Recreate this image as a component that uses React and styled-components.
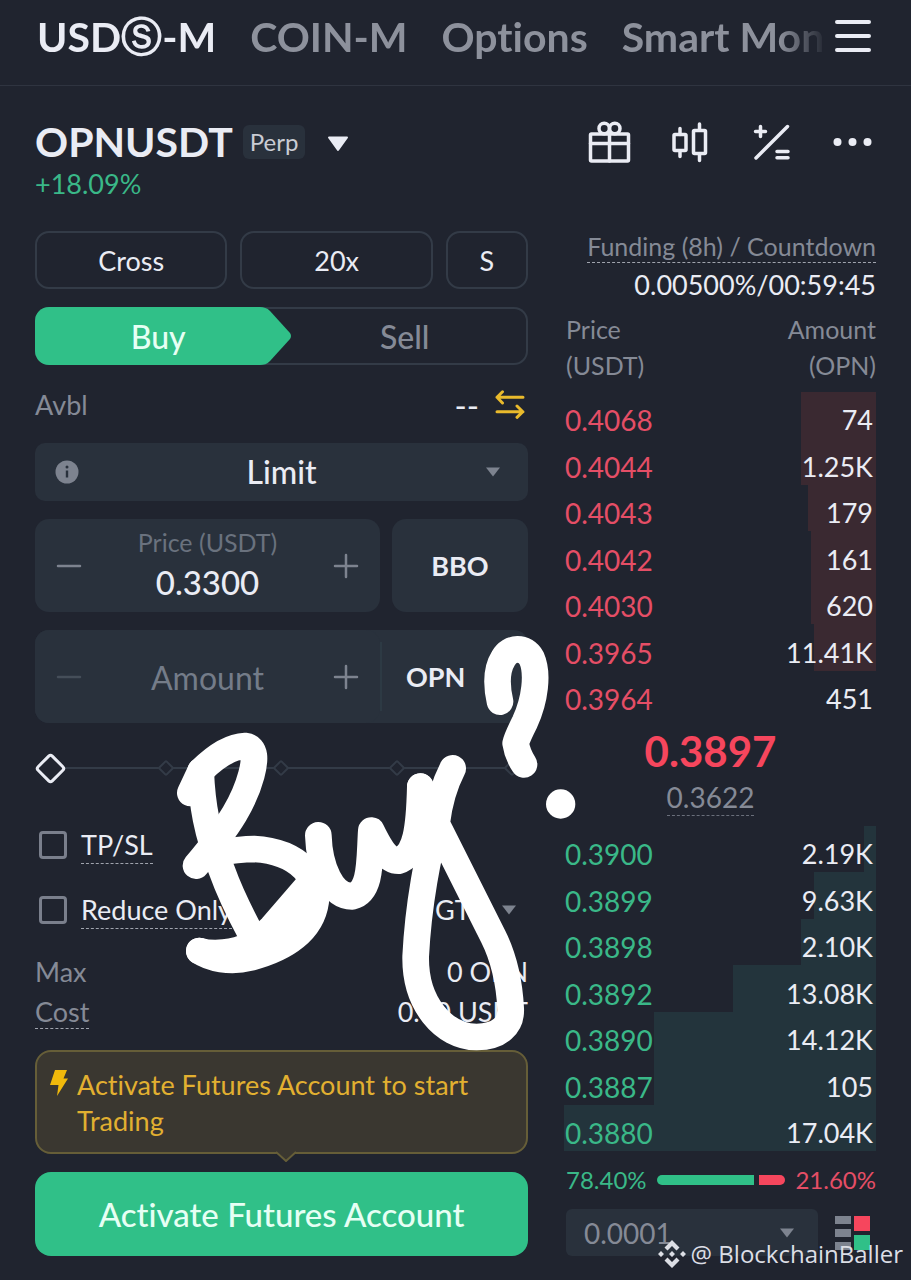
import React, { useState } from "react";
import styled, { createGlobalStyle } from "styled-components";

const c = {
  bg: "#20242f",
  panel: "#29313c",
  line: "#333b47",
  text: "#eaecf4",
  muted: "#858a96",
  faint: "#6a727e",
  green: "#30c088",
  greenText: "#3ab888",
  red: "#f6465d",
  redText: "#e54e66",
  yellow: "#f0b90b",
};

const GlobalStyle = createGlobalStyle`
  * { box-sizing: border-box; }
  body { margin: 0; background: ${c.bg}; }
  button, input, select { font: inherit; color: inherit; }
  button { background: none; border: 0; padding: 0; cursor: pointer; }
  h1, p, dl, dd { margin: 0; }
`;

const Page = styled.div`
  position: relative;
  min-height: 100vh;
  overflow: hidden;
  background: ${c.bg};
  color: ${c.text};
  font: 400 27px/36px Lato, "Liberation Sans", sans-serif;
  font-variant-ligatures: none;
`;

const TopBar = styled.header`
  display: flex;
  align-items: flex-start;
  height: 86px;
  padding: 11px 40px 0 37px;
  border-bottom: 1px solid #2f3440;
`;

const Tabs = styled.nav`
  flex: 1;
  min-width: 0;
  display: flex;
  gap: 34px;
  overflow: hidden;
  white-space: nowrap;
  mask-image: linear-gradient(to right, #000 calc(100% - 48px), transparent);
`;

const Tab = styled.a`
  display: flex;
  color: ${(p) => (p.$active ? c.text : "#8d919c")};
  font-size: 41px;
  line-height: 52px;
  font-weight: 700;
  text-decoration: none;
`;

const CoinMark = styled.span`
  font-family: "DejaVu Sans", sans-serif;
  font-size: 41px;
`;

const MenuButton = styled.button`
  flex: none;
  display: flex;
  padding: 8px 0 0 8px;
`;

const PairBar = styled.section`
  display: flex;
  justify-content: space-between;
  padding: 32px 37px 0 35px;
`;

const PairName = styled.div`
  display: flex;
  align-items: center;
  height: 48px;
  h1 { font-size: 41px; line-height: 48px; font-weight: 700; }
`;

const PerpTag = styled.span`
  margin: 0 22px 0 10px;
  padding: 0 7px;
  border-radius: 6px;
  background: ${c.panel};
  color: #c9ccd4;
  font-size: 24px;
  line-height: 34px;
`;

const Change = styled.p`
  color: ${c.greenText};
  font-size: 27px;
`;

const Tools = styled.div`
  display: flex;
  gap: 37px;
  height: 48px;
  button { display: flex; align-items: center; }
`;

const Columns = styled.main`
  display: grid;
  grid-template-columns: 493fr 312fr;
  column-gap: 36px;
  padding: 29px 35px 24px;
`;

const Form = styled.form`
  display: flex;
  flex-direction: column;
  gap: 18px;
`;

const ModeRow = styled.div`
  display: grid;
  grid-template-columns: 192fr 192fr 82fr;
  gap: 13px;
`;

const OutlineButton = styled.button`
  height: 58px;
  padding-top: 2px;
  border: 2px solid ${c.line};
  border-radius: 14px;
`;

const SideSwitch = styled.div`
  position: relative;
  display: flex;
  height: 58px;
  border-radius: 14px;
  box-shadow: inset 0 0 0 2px ${c.line};
`;

const SideButton = styled.button`
  position: relative;
  width: 50%;
  padding-top: 2px;
  font-size: 32px;
  font-weight: 500;
  color: ${(p) => (p.$active ? "#e6fff4" : c.muted)};
  span { position: relative; }
`;

const SideFill = styled.i`
  position: absolute;
  inset: 0 22px 0 0;
  border-radius: 14px 0 0 14px;
  background: ${c.green};
  svg { position: absolute; left: 100%; top: 0; }
`;

const Available = styled.div`
  display: flex;
  align-items: center;
  height: 42px;
  padding-top: 2px;
  color: ${c.muted};
  b { margin-left: auto; margin-right: 16px; color: ${c.text}; font-size: 33px; font-weight: 400; }
  button { display: flex; margin-right: 3px; }
`;

const Picker = styled.div`
  position: relative;
  display: flex;
  align-items: center;
  height: ${(p) => p.$height}px;
  border-radius: ${(p) => p.$radius}px;
  background: ${c.panel};
  select {
    width: 100%;
    height: 100%;
    padding: ${(p) => p.$pad};
    border: 0;
    appearance: none;
    background: none;
    outline: 0;
    font-size: ${(p) => p.$size}px;
    font-weight: ${(p) => p.$weight || 400};
    color: ${(p) => p.$color || c.text};
    text-align: ${(p) => p.$align || "left"};
    text-align-last: ${(p) => p.$align || "left"};
  }
`;

const InfoIcon = styled.span`
  position: absolute;
  left: 20px;
  display: flex;
`;

const Caret = styled.svg`
  position: absolute;
  right: ${(p) => p.$right}px;
  top: calc(50% - 5px);
  pointer-events: none;
`;

const FieldRow = styled.div`
  display: grid;
  grid-template-columns: 345fr 136fr;
  gap: 12px;
`;

const Fields = styled.div`
  display: grid;
  grid-template-columns: 345fr 148fr;
  border-radius: 14px;
  background: ${c.panel};
`;

const Stepper = styled.div`
  display: flex;
  align-items: center;
  height: 93px;
  padding: 0 21px;
  border-radius: 14px;
  background: ${c.panel};
  button { display: flex; }
`;

const StepField = styled.label`
  flex: 1;
  min-width: 0;
  display: flex;
  flex-direction: column;
  text-align: center;
  color: ${c.faint};
  font-size: 25px;
  line-height: 32px;
  input {
    width: 100%;
    height: 48px;
    padding: 0;
    border: 0;
    background: none;
    outline: 0;
    text-align: center;
    font-size: 33px;
    font-weight: 500;
    color: ${c.text};
  }
  input::placeholder { color: #747c89; opacity: 1; font-size: 32px; font-weight: 400; }
`;

const PanelButton = styled.button`
  border-radius: 14px;
  background: ${c.panel};
  font-weight: 700;
`;

const UnitPicker = styled(Picker)`
  height: auto;
  margin: 12px 0;
  border-radius: 0;
  border-left: 2px solid #2d3a44;
`;

const SliderBox = styled.div`
  position: relative;
  height: 54px;
  input {
    position: relative;
    display: block;
    width: calc(100% - 10px);
    height: 54px;
    margin: 0 0 0 4px;
    appearance: none;
    background: none;
  }
  input::-webkit-slider-thumb {
    appearance: none;
    width: 23px;
    height: 23px;
    border: 3px solid ${c.text};
    border-radius: 4px;
    background: ${c.bg};
    transform: rotate(45deg);
  }
`;

const SliderMarks = styled.div`
  position: absolute;
  inset: 0 10px 0 9px;
  display: flex;
  align-items: center;
  justify-content: space-between;
  background: linear-gradient(${c.line}, ${c.line}) center / 100% 2px no-repeat;
  i {
    width: 12px;
    height: 12px;
    border: 2px solid ${c.line};
    border-radius: 2px;
    background: ${c.bg};
    transform: rotate(45deg);
  }
`;

const Options = styled.div`
  display: flex;
  flex-direction: column;
  gap: 29px;
  padding: 14px 0 6px;
`;

const OptionRow = styled.div`
  display: flex;
  align-items: center;
  justify-content: space-between;
  height: 36px;
`;

const Check = styled.label`
  display: flex;
  align-items: center;
  gap: 14px;
  padding-left: 4px;
  input {
    appearance: none;
    width: 28px;
    height: 28px;
    margin: 0;
    border: 3px solid #7a7f8c;
    border-radius: 4px;
  }
`;

const Dotted = styled.span`
  line-height: 36px;
  border-bottom: 1px dashed ${(p) => p.$line || "#a0a4ae"};
`;

const ForcePicker = styled(Picker)`
  width: 93px;
  background: none;
`;

const Totals = styled.dl`
  div { display: flex; justify-content: space-between; height: 40px; align-items: center; }
  dt { color: ${c.muted}; }
`;

const Notice = styled.p`
  position: relative;
  display: flex;
  gap: 8px;
  min-height: 103px;
  padding: 15px 12px 13px;
  border: 2px solid #665e38;
  border-radius: 16px;
  background: #3a3730;
  color: #e2b030;
  > svg { flex: none; margin-top: 2px; }
`;

const NoticeTip = styled.span`
  position: absolute;
  left: calc(50% - 6px);
  bottom: -10px;
  display: flex;
`;

const Submit = styled.button`
  height: 84px;
  border-radius: 16px;
  background: ${c.green};
  color: #e6fff4;
  font-size: 33px;
  font-weight: 500;
`;

const Book = styled.aside`
  display: flex;
  flex-direction: column;
`;

const Funding = styled.div`
  display: flex;
  flex-direction: column;
  align-items: flex-end;
  margin-bottom: 3px;
  color: ${c.muted};
  font-size: 25px;
  ${Dotted} { line-height: 31px; }
  p { color: ${c.text}; font-size: 27px; line-height: 44px; }
`;

const Ladder = styled.table`
  width: 100%;
  border-collapse: collapse;
  thead th {
    height: 82px;
    padding: 0 0 8px 2px;
    font-size: 25px;
    font-weight: 400;
    text-align: left;
    color: ${c.muted};
  }
  thead th + th { text-align: right; }
`;

const Level = styled.tr`
  height: 46px;
  background: linear-gradient(to left, ${(p) => p.$tone} ${(p) => p.$depth}%, transparent ${(p) => p.$depth}%);
  &:nth-child(even) { height: 47px; }
  td { padding: 10px 3px 0 1px; line-height: 34px; }
  td:first-child { color: ${(p) => p.$color}; font-size: 28px; }
  td + td { text-align: right; }
`;

const LastPrice = styled.div`
  display: flex;
  flex-direction: column;
  align-items: center;
  gap: 2px;
  height: 109px;
  padding: 8px 19px 0 0;
  color: ${c.muted};
  font-size: 28px;
  strong { color: ${c.red}; font-size: 42px; line-height: 52px; }
`;

const Ratio = styled.div`
  display: flex;
  align-items: center;
  gap: 10px;
  height: 58px;
  padding-left: 2px;
  font-size: 24px;
`;

const Share = styled.span`
  color: ${(p) => p.$color};
`;

const Bar = styled.span`
  flex: ${(p) => p.$share};
  height: 10px;
  background: ${(p) => p.$color};
  border-radius: ${(p) => (p.$left ? "5px 0 0 5px" : "0 5px 5px 0")};
`;

const Bars = styled.span`
  flex: 1;
  display: flex;
  gap: 5px;
`;

const BookFooter = styled.div`
  display: flex;
  align-items: center;
  padding-left: 2px;
  ${Picker} { flex: 1; margin-right: 17px; }
  > button { display: flex; margin-right: 5px; }
`;

const Scribble = styled.svg`
  position: absolute;
  left: 150px;
  top: 620px;
  pointer-events: none;
`;

const Watermark = styled.div`
  position: absolute;
  right: 8px;
  bottom: 8px;
  display: flex;
  align-items: center;
  gap: 5px;
  color: #dcdee5;
  font: 400 24px/36px "Open Sans", "Noto Sans", sans-serif;
`;

const asks = [
  ["0.4068", "74", 24],
  ["0.4044", "1.25K", 24],
  ["0.4043", "179", 22],
  ["0.4042", "161", 21],
  ["0.4030", "620", 21],
  ["0.3965", "11.41K", 20],
  ["0.3964", "451", 0],
];

const bids = [
  ["0.3900", "2.19K", 4],
  ["0.3899", "9.63K", 20],
  ["0.3898", "2.10K", 24],
  ["0.3892", "13.08K", 46],
  ["0.3890", "14.12K", 71],
  ["0.3887", "105", 71],
  ["0.3880", "17.04K", 100],
];

const Icon = ({ children, size = 44, color = c.text, width = 3 }) => (
  <svg
    width={size}
    height={size}
    viewBox={`0 0 ${size} ${size}`}
    fill="none"
    stroke={color}
    strokeWidth={width}
    strokeLinecap="round"
    strokeLinejoin="round"
    aria-hidden="true"
  >
    {children}
  </svg>
);

const Triangle = ({ right }) => (
  <Caret $right={right} width="16" height="10" viewBox="0 0 16 10" aria-hidden="true">
    <path d="M1 0.5h14L8 9.5z" fill="#7d838f" />
  </Caret>
);

const Minus = ({ color = "#7d838f" }) => (
  <Icon size={26} color={color} width={2.5}>
    <path d="M2 13h22" />
  </Icon>
);

const Plus = () => (
  <Icon size={26} color="#7d838f" width={2.5}>
    <path d="M2 13h22M13 2v22" />
  </Icon>
);

const Levels = ({ rows, tone, color }) => (
  <tbody>
    {rows.map(([price, amount, depth]) => (
      <Level key={price} $tone={tone} $color={color} $depth={depth}>
        <td>{price}</td>
        <td>{amount}</td>
      </Level>
    ))}
  </tbody>
);

export default function App() {
  const [price, setPrice] = useState("0.3300");
  const [amount, setAmount] = useState("");
  const [share, setShare] = useState(0);

  return (
    <Page>
      <GlobalStyle />
      <TopBar>
        <Tabs>
          <Tab href="#usds" $active>
            USD<CoinMark>Ⓢ</CoinMark>-M
          </Tab>
          <Tab href="#coin">COIN-M</Tab>
          <Tab href="#options">Options</Tab>
          <Tab href="#smart">Smart Mon</Tab>
        </Tabs>
        <MenuButton aria-label="Menu">
          <svg width="36" height="34" viewBox="0 0 36 34" aria-hidden="true">
            <path d="M2 3h32M2 17h32M2 31h32" stroke={c.text} strokeWidth="4" strokeLinecap="round" />
          </svg>
        </MenuButton>
      </TopBar>

      <PairBar>
        <div>
          <PairName>
            <h1>OPNUSDT</h1>
            <PerpTag>Perp</PerpTag>
            <button aria-label="Choose pair">
              <svg width="22" height="16" viewBox="0 0 22 16" aria-hidden="true">
                <path d="M2 1.5h18L11 14z" fill={c.text} stroke={c.text} strokeWidth="2" strokeLinejoin="round" />
              </svg>
            </button>
          </PairName>
          <Change>+18.09%</Change>
        </div>
        <Tools>
          <button aria-label="Rewards">
            <Icon width={3.5}>
              <rect x="3.5" y="14" width="38" height="27" rx="1" />
              <path d="M3.5 23.5h38M22.5 14v27" />
              <circle cx="17.2" cy="8.5" r="5.2" />
              <circle cx="27.8" cy="8.5" r="5.2" />
            </Icon>
          </button>
          <button aria-label="Chart">
            <Icon width={3.5}>
              <rect x="6" y="14.5" width="12" height="16" rx="1" />
              <path d="M12 8.5v6M12 31v5.5M31.5 4v6M31.5 34v6.5" />
              <rect x="25.5" y="10.5" width="12" height="23" rx="1" />
            </Icon>
          </button>
          <button aria-label="Calculator">
            <Icon width={3.5}>
              <path d="M38.5 6.5L7 38M6.5 11.5h10M11.5 6.5v10" />
              <path d="M28 31.5h11M28 37.8h11" />
            </Icon>
          </button>
          <button aria-label="More">
            <svg width="44" height="44" viewBox="0 0 44 44" fill={c.text} aria-hidden="true">
              <circle cx="7.5" cy="22" r="4" />
              <circle cx="22.5" cy="22" r="4" />
              <circle cx="37.5" cy="22" r="4" />
            </svg>
          </button>
        </Tools>
      </PairBar>

      <Columns>
        <Form onSubmit={(e) => e.preventDefault()}>
          <ModeRow>
            <OutlineButton type="button">Cross</OutlineButton>
            <OutlineButton type="button">20x</OutlineButton>
            <OutlineButton type="button">S</OutlineButton>
          </ModeRow>

          <SideSwitch>
            <SideButton type="button" $active>
              <SideFill>
                <svg width="32" height="58" viewBox="0 0 32 58" aria-hidden="true">
                  <path d="M0 0C4 0 7 1 10 4L30 26Q32 29 30 32L10 54C7 57 4 58 0 58H-1V0z" fill={c.green} />
                </svg>
              </SideFill>
              <span>Buy</span>
            </SideButton>
            <SideButton type="button">Sell</SideButton>
          </SideSwitch>

          <Available>
            Avbl <b>--</b>
            <button type="button" aria-label="Transfer">
              <Icon size={30} color="#e9ba2c">
                <path d="M28 7.3H2M7.5 1.8L2 7.3l5.5 5.7M2 21.7h26M22 16l5.8 5.7L22 27.3" />
              </Icon>
            </button>
          </Available>

          <Picker $height={58} $radius={10} $pad="0 40px" $size={32} $weight={500} $align="center">
            <InfoIcon>
              <svg width="24" height="24" viewBox="0 0 24 24" aria-hidden="true">
                <circle cx="12" cy="12" r="11.5" fill="#7d838f" />
                <path d="M12 10.5v7" stroke={c.panel} strokeWidth="2.4" />
                <circle cx="12" cy="7" r="1.5" fill={c.panel} />
              </svg>
            </InfoIcon>
            <select aria-label="Order type">
              <option>Limit</option>
            </select>
            <Triangle right={27} />
          </Picker>

          <FieldRow>
            <Stepper>
              <button type="button" aria-label="Lower price"><Minus /></button>
              <StepField>
                Price (USDT)
                <input value={price} onChange={(e) => setPrice(e.target.value)} />
              </StepField>
              <button type="button" aria-label="Raise price"><Plus /></button>
            </Stepper>
            <PanelButton type="button">BBO</PanelButton>
          </FieldRow>

          <Fields>
            <Stepper>
              <button type="button" aria-label="Lower amount"><Minus color="#454e59" /></button>
              <StepField>
                <input
                  aria-label="Amount"
                  placeholder="Amount"
                  value={amount}
                  onChange={(e) => setAmount(e.target.value)}
                />
              </StepField>
              <button type="button" aria-label="Raise amount"><Plus /></button>
            </Stepper>
            <UnitPicker $pad="0 0 0 24px" $size={27} $weight={700}>
              <select aria-label="Amount unit">
                <option>OPN</option>
              </select>
              <Triangle right={27} />
            </UnitPicker>
          </Fields>

          <SliderBox>
            <SliderMarks>
              <i /><i /><i /><i /><i />
            </SliderMarks>
            <input
              type="range"
              aria-label="Share of balance"
              value={share}
              onChange={(e) => setShare(e.target.value)}
            />
          </SliderBox>

          <Options>
            <OptionRow>
              <Check>
                <input type="checkbox" />
                <Dotted>TP/SL</Dotted>
              </Check>
            </OptionRow>
            <OptionRow>
              <Check>
                <input type="checkbox" />
                <Dotted>Reduce Only</Dotted>
              </Check>
              <ForcePicker $height={36} $radius={0} $pad="0" $size={27}>
                <select aria-label="Time in force">
                  <option>GTC</option>
                </select>
                <Triangle right={11} />
              </ForcePicker>
            </OptionRow>
          </Options>

          <Totals>
            <div>
              <dt>Max</dt>
              <dd>0 OPN</dd>
            </div>
            <div>
              <dt><Dotted>Cost</Dotted></dt>
              <dd>0.00 USDT</dd>
            </div>
          </Totals>

          <Notice>
            <svg width="20" height="28" viewBox="0 0 20 28" aria-hidden="true">
              <path d="M6 1h12l-3.5 8.5H19L8 27l1.500-11H1z" fill={c.yellow} />
            </svg>
            Activate Futures Account to start Trading
            <NoticeTip>
              <svg width="20" height="11" viewBox="0 0 20 11" aria-hidden="true">
                <path d="M0 0h20v1L10 10 0 1z" fill="#3a3730" />
                <path d="M0 1L10 10 20 1" fill="none" stroke="#665e38" strokeWidth="2" />
              </svg>
            </NoticeTip>
          </Notice>

          <Submit>Activate Futures Account</Submit>
        </Form>

        <Book>
          <Funding>
            <Dotted>Funding (8h) / Countdown</Dotted>
            <p>0.00500%/00:59:45</p>
          </Funding>

          <Ladder>
            <thead>
              <tr>
                <th>Price<br />(USDT)</th>
                <th>Amount<br />(OPN)</th>
              </tr>
            </thead>
            <Levels rows={asks} tone="#3a2931" color={c.redText} />
          </Ladder>

          <LastPrice>
            <strong>0.3897</strong>
            <Dotted $line="#6a6f7b">0.3622</Dotted>
          </LastPrice>

          <Ladder>
            <Levels rows={bids} tone="#23343c" color={c.greenText} />
          </Ladder>

          <Ratio>
            <Share $color={c.greenText}>78.40%</Share>
            <Bars>
              <Bar $share={78.4} $color={c.green} $left />
              <Bar $share={21.6} $color={c.red} />
            </Bars>
            <Share $color={c.redText}>21.60%</Share>
          </Ratio>

          <BookFooter>
            <Picker $height={47} $radius={6} $pad="0 18px" $size={28} $color={c.muted}>
              <select aria-label="Price step">
                <option>0.0001</option>
              </select>
              <Triangle right={23} />
            </Picker>
            <button aria-label="Book layout">
              <svg width="36" height="36" viewBox="0 0 36 36" aria-hidden="true">
                <path d="M0 1h16v8H0zM0 14h16v8H0zM0 27h16v8H0z" fill="#7d838f" />
                <path d="M19 1h16v15H19z" fill={c.red} />
                <path d="M19 20h16v15H19z" fill={c.green} />
              </svg>
            </button>
          </BookFooter>
        </Book>
      </Columns>

      <Scribble
        width="440"
        height="440"
        viewBox="0 0 1320 1320"
        fill="none"
        stroke="#fff"
        strokeWidth="80"
        strokeLinecap="round"
        strokeLinejoin="round"
        aria-hidden="true"
      >
        <path d="M121 519L152 453C156 550 170 640 215 750C240 820 270 880 302 940" />
        <path d="M152 453C195 410 240 380 285 378C318 382 316 420 304 465C284 540 245 610 138 737" />
        <path d="M190 700C240 692 280 687 312 687C370 690 425 708 462 745C488 770 500 800 497 845C485 930 410 985 300 1013C240 1028 180 1015 148 993" />
        <path d="M480 790L366 922L318 968L400 950L460 860" />
        <path d="M148 993C190 1005 250 1000 302 975L302 940" />
        <path d="M505 646C508 740 545 830 607 829C665 815 658 720 664 632C685 675 710 722 745 722C800 705 808 620 811 500" />
        <path d="M908 445C885 490 868 540 860 610C835 700 805 850 797 1010C795 1150 880 1250 980 1251C1050 1250 1085 1215 1082 1165C1078 1090 1060 1010 1030 950L860 612" />
        <path d="M811 500L825 560L815 680L840 690" />
        <path d="M1050 245C1040 200 1038 150 1060 115C1080 80 1125 78 1145 115C1165 160 1155 240 1125 305C1110 335 1100 355 1097 370C1100 390 1110 415 1122 433" />
        <circle cx="1232" cy="552" r="44" fill="#fff" stroke="none" />
      </Scribble>

      <Watermark>
        <svg width="28" height="28" viewBox="0 0 28 28" fill="currentColor" aria-hidden="true">
          <path d="M14 0l7.5 7.5-3 3L14 6l-4.5 4.5-3-3z" />
          <path d="M14 28l7.5-7.5-3-3L14 22l-4.5-4.5-3 3z" />
          <path d="M3 11l3 3-3 3-3-3zM25 11l3 3-3 3-3-3zM14 11l3 3-3 3-3-3z" />
        </svg>
        @ BlockchainBaller
      </Watermark>
    </Page>
  );
}
